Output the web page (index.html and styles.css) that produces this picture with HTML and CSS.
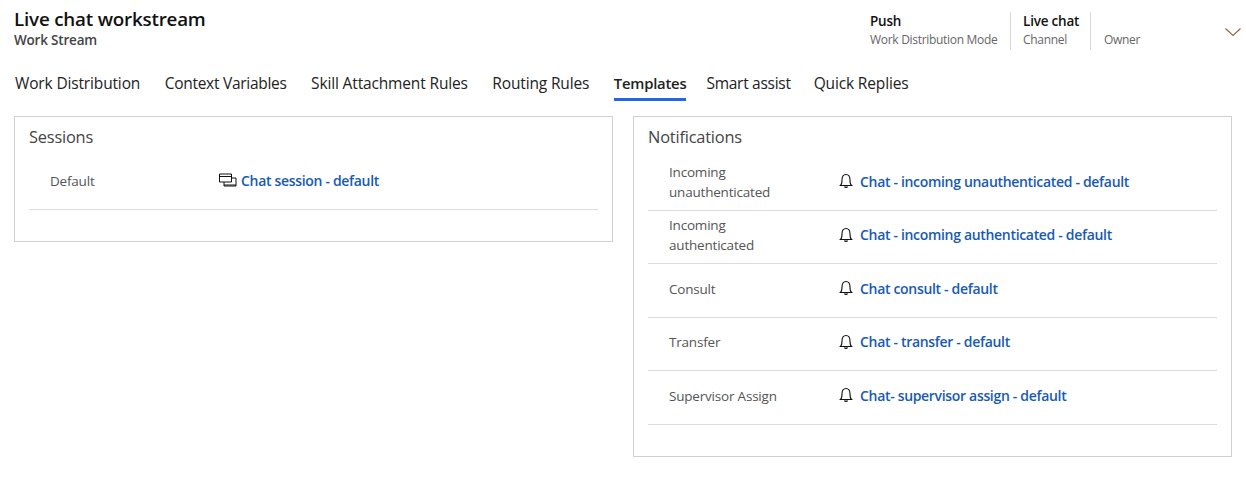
FILE: index.html
```html
<!DOCTYPE html>
<html lang="en">

<head>
    <meta charset="UTF-8">
    <title>Live chat workstream</title>
    <link rel="stylesheet" href="styles.css">
</head>

<body>
    <header class="top">
        <div class="title_box">
            <h1>Live chat workstream</h1>
            <div class="sub">Work Stream</div>
        </div>
        <div class="facts">
            <div class="fact fact_mode">
                <b>Push</b>
                <span>Work Distribution Mode</span>
            </div>
            <div class="fact fact_channel">
                <b>Live chat</b>
                <span>Channel</span>
            </div>
            <div class="fact fact_owner">
                <b>&nbsp;</b>
                <span>Owner</span>
            </div>
        </div>
        <svg class="chevron" width="16" height="9" viewBox="0 0 16 9">
            <path d="M.5.5 8 7.500 15.500.5" fill="none" stroke="#8a6a3c" stroke-width="1.100" />
        </svg>
    </header>

    <nav class="tabs">
        <a class="tab">Work Distribution</a>
        <a class="tab tab_tight">Context Variables</a>
        <a class="tab">Skill Attachment Rules</a>
        <a class="tab">Routing Rules</a>
        <a class="tab active">Templates</a>
        <a class="tab tab_tight tab_smart">Smart assist</a>
        <a class="tab">Quick Replies</a>
    </nav>

    <main class="panels">
        <section class="panel panel_sessions">
            <h2>Sessions</h2>
            <div class="row">
                <div class="label">Default</div>
                <div class="value">
                    <svg class="icon" width="18" height="14" viewBox="0 0 18 14">
                        <path d="M.5 1h12v8H.5zM.5 3.500h12M5 9v4h12V5h-4.500M5 12h12" fill="none" stroke="#111" />
                    </svg>
                    <a class="link">Chat session - default</a>
                </div>
            </div>
        </section>

        <section class="panel panel_notes">
            <h2>Notifications</h2>
            <div class="row">
                <div class="label">Incoming unauthenticated</div>
                <div class="value">
                    <svg class="icon bell" width="16" height="16" viewBox="0 0 16 16">
                        <path d="M2.500 12.500h11c-1.200-1-1.500-2.500-1.500-5.500C12 3.500 10.500 1.500 8 1.500S4 3.500 4 7c0 3-.3 4.500-1.500 5.500zM6.500 13.500c.3 1.200 2.700 1.200 3 0" fill="none" stroke="#111" stroke-width="1.100" />
                    </svg>
                    <a class="link">Chat - incoming unauthenticated - default</a>
                </div>
            </div>
            <div class="row">
                <div class="label">Incoming authenticated</div>
                <div class="value">
                    <svg class="icon bell" width="16" height="16" viewBox="0 0 16 16">
                        <path d="M2.500 12.500h11c-1.200-1-1.500-2.500-1.500-5.500C12 3.500 10.500 1.500 8 1.500S4 3.500 4 7c0 3-.3 4.500-1.500 5.500zM6.500 13.500c.3 1.200 2.700 1.200 3 0" fill="none" stroke="#111" stroke-width="1.100" />
                    </svg>
                    <a class="link">Chat - incoming authenticated - default</a>
                </div>
            </div>
            <div class="row">
                <div class="label">Consult</div>
                <div class="value">
                    <svg class="icon bell" width="16" height="16" viewBox="0 0 16 16">
                        <path d="M2.500 12.500h11c-1.200-1-1.500-2.500-1.500-5.500C12 3.500 10.500 1.500 8 1.500S4 3.500 4 7c0 3-.3 4.500-1.500 5.500zM6.500 13.500c.3 1.200 2.700 1.200 3 0" fill="none" stroke="#111" stroke-width="1.100" />
                    </svg>
                    <a class="link">Chat consult - default</a>
                </div>
            </div>
            <div class="row">
                <div class="label">Transfer</div>
                <div class="value">
                    <svg class="icon bell" width="16" height="16" viewBox="0 0 16 16">
                        <path d="M2.500 12.500h11c-1.200-1-1.500-2.500-1.500-5.500C12 3.500 10.500 1.500 8 1.500S4 3.500 4 7c0 3-.3 4.500-1.500 5.500zM6.500 13.500c.3 1.200 2.700 1.200 3 0" fill="none" stroke="#111" stroke-width="1.100" />
                    </svg>
                    <a class="link">Chat - transfer - default</a>
                </div>
            </div>
            <div class="row">
                <div class="label">Supervisor Assign</div>
                <div class="value">
                    <svg class="icon bell" width="16" height="16" viewBox="0 0 16 16">
                        <path d="M2.500 12.500h11c-1.200-1-1.500-2.500-1.500-5.500C12 3.500 10.500 1.500 8 1.500S4 3.500 4 7c0 3-.3 4.500-1.500 5.500zM6.500 13.500c.3 1.200 2.700 1.200 3 0" fill="none" stroke="#111" stroke-width="1.100" />
                    </svg>
                    <a class="link">Chat- supervisor assign - default</a>
                </div>
            </div>
        </section>
    </main>
</body>

</html>
```

FILE: styles.css
```css
* {
    box-sizing: border-box;
}

body {
    margin: 0;
    background-color: #fff;
    color: #333;
    font-family: "Open Sans", "Noto Sans", "Liberation Sans", sans-serif;
    font-size: 13.500px;
    letter-spacing: -0.2px;
}

.top {
    height: 62px;
    padding: 7px 5px 0 14px;
    display: flex;
    align-items: flex-start;
}

.title_box {
    flex: 1;
}

h1 {
    margin: 0;
    height: 25px;
    font-size: 18.800px;
    line-height: 25px;
    font-weight: 600;
    color: #111;
}

.sub {
    font-size: 13.500px;
    line-height: 17px;
    font-weight: 600;
    color: #444;
}

.facts {
    display: flex;
    margin-top: 5px;
}

.fact {
    height: 38px;
    display: flex;
    flex-direction: column;
    border-right: 1px solid #d8d8d8;
    padding-left: 12px;
}

.fact b {
    font-size: 13.500px;
    line-height: 18px;
    font-weight: 600;
    color: #111;
}

.fact span {
    font-size: 12px;
    line-height: 20px;
    letter-spacing: -0.3px;
    color: #666;
}

.fact_mode {
    width: 141px;
    padding-left: 0;
}

.fact_channel {
    width: 80px;
}

.fact_owner {
    width: 134px;
    padding-left: 13px;
    border-right: none;
}

.chevron {
    margin: 21px 0 0 0;
}

.tabs {
    height: 39px;
    padding-left: 15px;
    display: flex;
}

.tab {
    height: 39px;
    margin-right: 24.500px;
    padding-top: 10px;
    font-size: 15.500px;
    line-height: 22px;
    letter-spacing: -0.15px;
    color: #222;
}

.tab_tight {
    letter-spacing: -0.28px;
}

.tab_smart {
    margin-right: 23px;
}

.tab.active {
    margin-right: 20px;
    border-bottom: 3px solid #2266e3;
    font-size: 14.800px;
    font-weight: 600;
    letter-spacing: -0.2px;
    color: #222;
}

.panels {
    margin-top: 15px;
    padding: 0 14px;
    display: flex;
    align-items: flex-start;
    gap: 20px;
}

.panel {
    width: 599px;
    border: 1px solid #d0d0d0;
    padding: 0 14px;
}

.panel_sessions {
    height: 126px;
}

.panel_notes {
    height: 341px;
}

h2 {
    margin: 0;
    height: 39px;
    padding-top: 8px;
    font-size: 16.400px;
    line-height: 24px;
    font-weight: 400;
    color: #444;
}

.panel_notes h2 {
    height: 40px;
}

.row {
    height: 53.500px;
    display: flex;
    align-items: center;
    border-bottom: 1px solid #dcdcdc;
}

.label {
    width: 190px;
    padding-left: 21px;
    padding-right: 40px;
    padding-bottom: 3px;
    line-height: 20px;
    color: #555;
}

.value {
    display: flex;
    align-items: center;
    padding-bottom: 4px;
}

.panel_sessions .value {
    padding-bottom: 4px;
}

.icon {
    margin-right: 4px;
}

.bell {
    margin-right: 6px;
}

.link {
    font-size: 14px;
    font-weight: 600;
    letter-spacing: -0.32px;
    color: #175ab4;
}
```
